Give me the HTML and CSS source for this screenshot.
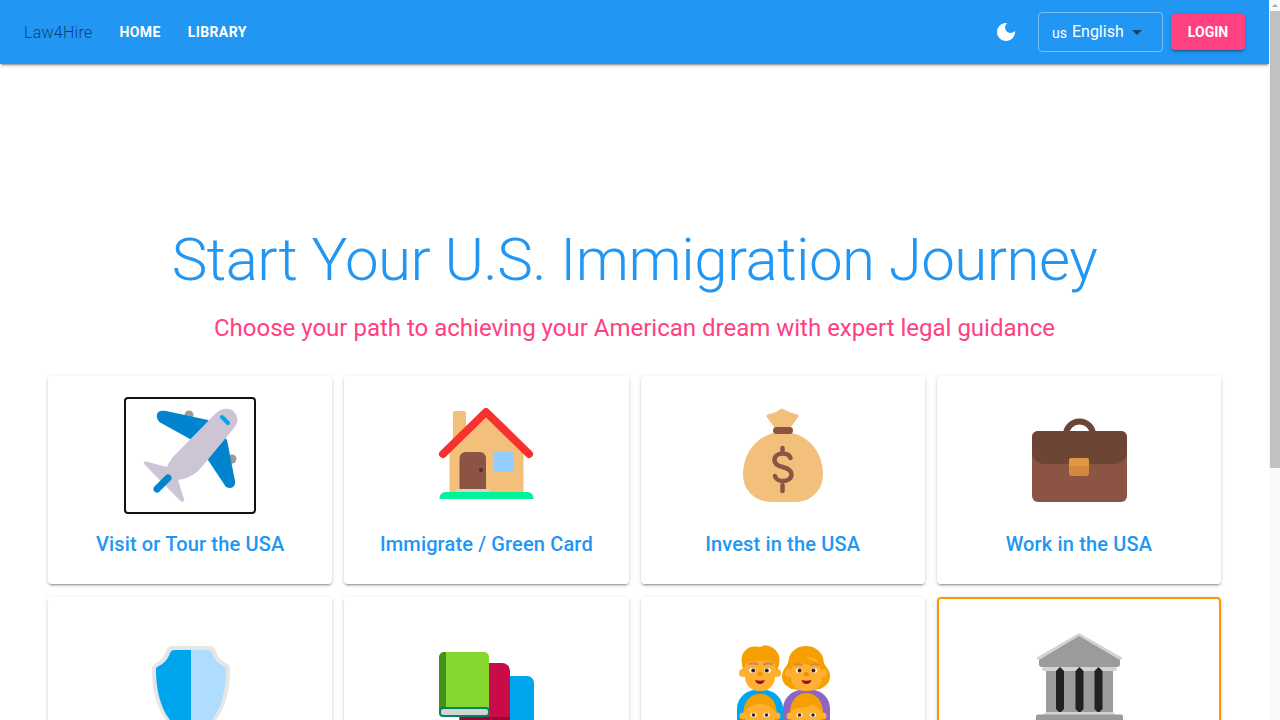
FILE: index.html
```html
<!DOCTYPE html>
<html lang="en">
<head>
    <meta charset="UTF-8">
    <title>Law4Hire</title>
    <link rel="stylesheet" href="styles.css">
</head>
<body>
    <div class="page">
        <header class="app-bar">
            <div class="brand">Law4Hire</div>
            <nav class="nav">
                <a class="nav-link" href="#">Home</a>
                <a class="nav-link" href="#">Library</a>
            </nav>
            <div class="spacer"></div>
            <button class="theme-btn" aria-label="Toggle theme">
                <svg viewBox="0 0 24 24" width="24" height="24"><path fill="#fff" d="M12 3c-4.97 0-9 4.03-9 9s4.03 9 9 9 9-4.030 9-9c0-.46-.04-.92-.1-1.360-.98 1.370-2.580 2.260-4.400 2.260-2.980 0-5.400-2.420-5.400-5.400 0-1.810.89-3.420 2.260-4.400-.44-.06-.9-.1-1.360-.1z"/></svg>
            </button>
            <div class="lang-select">
                <span class="lang-code">us</span>
                <span class="lang-name">English</span>
                <span class="lang-caret"></span>
            </div>
            <button class="login-btn">Login</button>
        </header>

        <main class="main">
            <h1 class="title">Start Your U.S. Immigration Journey</h1>
            <p class="subtitle">Choose your path to achieving your American dream with expert legal guidance</p>

            <section class="path-grid">
                <a class="path-card" href="#">
                    <span class="icon-wrap focused">
                        <svg class="path-icon" viewBox="0 0 96 96">
                            <circle cx="47" cy="7" r="4.500" fill="#9b9b9b"/>
                            <circle cx="90" cy="51" r="4.500" fill="#9b9b9b"/>
                            <path fill="#0084ce" d="M17 3.500c2-1 4-1 7-.5l42 9 19 20 8 41c.6 4-1.500 7-5 7-3 0-5-1.500-6-4L66 52 48 31 19 15c-4-2-6-9-2-11.500z"/>
                            <path fill="#cdc4d6" d="M74 5c6-5 15-6 19 0 4 5 3 10-1 15L68 49c-4 5-8 10-13 15-5 4-12 7-19 8l6 19c.5 2-1 3.500-3 2.500L3 57c-2-2-1-4 1-3.500L25 59c1-4 4-7 6-10z"/>
                            <path stroke="#0084ce" stroke-width="7" stroke-linecap="round" d="M26 70 15 81"/>
                            <path stroke="#00a6ed" stroke-width="4" stroke-linecap="round" d="M80 9l6 6"/>
                        </svg>
                    </span>
                    <span class="path-label">Visit or Tour the USA</span>
                </a>

                <a class="path-card" href="#">
                    <svg class="path-icon" viewBox="0 0 96 96">
                        <rect x="15" y="3" width="13" height="36" rx="2" fill="#f3c07b"/>
                        <path fill="#f3c07b" d="M11.500 44 48 8l37.500 36v41h-74z"/>
                        <path fill="#8c5543" d="M21.500 50a6 6 0 0 1 6-6H42a6 6 0 0 1 6 6v32H21.500z"/>
                        <circle cx="43" cy="62" r="2" fill="#4a3030"/>
                        <rect x="55.500" y="44" width="20" height="20" rx="2" fill="#92ceff"/>
                        <rect x="18" y="81" width="33.500" height="5" fill="#d3d3d3"/>
                        <path fill="#00f397" d="M1.500 91v-1a6 6 0 0 1 6-6h82a6 6 0 0 1 6 6v1z"/>
                        <path fill="none" stroke="#f8312f" stroke-width="8" stroke-linecap="round" stroke-linejoin="round" d="M5 46 48 4l43 42"/>
                    </svg>
                    <span class="path-label">Immigrate / Green Card</span>
                </a>

                <a class="path-card" href="#">
                    <svg class="path-icon" viewBox="0 0 96 96">
                        <path fill="#f3c07b" d="M48 24c24 0 40 20 40 42 0 18-14 28-28 28H36C22 94 8 84 8 66c0-22 16-42 40-42z"/>
                        <polygon fill="#f3c07b" stroke="#f3c07b" stroke-width="3" stroke-linejoin="round" points="33,8 40,6 47,2 55,6 62,8 54,19 41,19"/>
                        <rect x="38" y="19" width="20" height="7" rx="3.500" fill="#8c5543"/>
                        <path fill="none" stroke="#8c5543" stroke-width="4.500" stroke-linecap="round" d="M55.500 50c-1-3-4-4.500-7.500-4.500-5 0-8.500 2.500-8.500 6.500 0 4 3 5.800 8 7 6 1.400 9 3.500 9 7.500s-4 6.500-8.500 6.500c-4 0-7-1.500-8-5M47.500 40v5M47.500 77v6"/>
                    </svg>
                    <span class="path-label">Invest in the USA</span>
                </a>

                <a class="path-card" href="#">
                    <svg class="path-icon" viewBox="0 0 96 96">
                        <path fill="none" stroke="#6d4534" stroke-width="6" d="M35 27a13.500 13.500 0 0 1 27 0"/>
                        <rect x="1" y="23" width="95" height="71" rx="6" fill="#8c5543"/>
                        <path fill="#6d4534" d="M7 23h83a6 6 0 0 1 6 6v15c0 7-6 12-12 12H13C7 56 1 51 1 44V29a6 6 0 0 1 6-6z"/>
                        <rect x="38" y="50" width="20" height="18" rx="3" fill="#d3883e"/>
                        <path fill="#e19747" d="M41 50h14a3 3 0 0 1 3 3v5H38v-5a3 3 0 0 1 3-3z"/>
                    </svg>
                    <span class="path-label">Work in the USA</span>
                </a>

                <a class="path-card" href="#">
                    <svg class="path-icon" viewBox="0 0 96 96">
                        <path fill="#e6e6e6" d="M30 17h38c3 0 5 2 6 5 2 7 7 11 12 13 1 1 2 3 2 5 0 20-4 38-14 51-5 6-15 12-25 15-10-3-20-9-25-15C14 78 10 60 10 40c0-2 1-4 2-5 5-2 10-6 12-13 1-3 3-5 6-5z"/>
                        <path fill="#00a6ed" d="M49 21H33c-3 0-4 1-5 3-2 7-8 12-13 14-1 1-1 1-1 3 0 19 4 37 14 50 5 6 13 10 21 12z"/>
                        <path fill="#aeddff" d="M49 21h16c3 0 4 1 5 3 2 7 8 12 13 14 1 1 1 1 1 3 0 19-4 37-14 50-5 6-13 10-21 12z"/>
                    </svg>
                </a>

                <a class="path-card" href="#">
                    <svg class="path-icon" viewBox="0 0 96 96">
                        <path fill="#00a6ed" d="M68 47h21a7 7 0 0 1 7 7v42H68z"/>
                        <path fill="#ca0b4a" d="M21.500 34H64a8 8 0 0 1 8 8v54H21.500z"/>
                        <rect x="21.500" y="88" width="50.500" height="8" fill="#990838"/>
                        <path fill="#86d72f" d="M8 23h38a5 5 0 0 1 5 5v51H8z"/>
                        <path fill="#44911b" d="M6 23h2v58H1V28a5 5 0 0 1 5-5z"/>
                        <rect x="2" y="79" width="49" height="8" rx="3" fill="#d3d3d3" stroke="#008463" stroke-width="2"/>
                    </svg>
                </a>

                <a class="path-card" href="#">
                    <svg class="path-icon" viewBox="0 0 96 96">
                        <path fill="#00a6ed" d="M2 96V80c0-11 9-19 19-19h8c10 0 19 8 19 19v16z"/>
                        <path fill="#8d65c5" d="M48 96V80c0-11 9-19 19-19h10c10 0 18 8 18 19v16z"/>

                        <circle cx="8" cy="44" r="4" fill="#ffb02e"/>
                        <circle cx="42" cy="44" r="4" fill="#ffb02e"/>
                        <rect x="10" y="24" width="30" height="38" rx="14" fill="#ffb02e"/>
                        <path fill="#f59f00" d="M9 43C5 33 6 24 11 21c4-5 11-3 14-3 5-3 13-1 17 5 4 5 3 14-1 20l-1-5c0-4-3-6-7-6H17c-4 0-7 2-7 6z"/>
                        <path stroke="#d9875a" stroke-width="2.500" stroke-linecap="round" d="M14 35c2-1 5-1 8 0M29 35c3-1 6-1 8 0"/>
                        <ellipse cx="17.500" cy="41.500" rx="3.200" ry="2.400" fill="#fff"/>
                        <ellipse cx="32.500" cy="41.500" rx="3.200" ry="2.400" fill="#fff"/>
                        <circle cx="18.200" cy="41.500" r="2" fill="#372128"/>
                        <circle cx="31.800" cy="41.500" r="2" fill="#372128"/>
                        <path fill="#ed9200" d="M23.500 43h3l1.500 4h-6z"/>
                        <path fill="#990838" d="M20 51c3 1 7 1 10 0-1 3-3 4-5 4s-4-1-5-4z"/>

                        <path fill="#f59f00" d="M71 17c8 0 13 4 16 9 2 4 1 7 3 10 3 4 5 7 5 11 0 7-5 11-10 13l-14 2-14-2c-5-2-10-6-10-13 0-4 2-7 5-11 2-3 1-6 3-10 3-5 8-9 16-9z"/>
                        <circle cx="54" cy="44" r="4" fill="#ffb02e"/>
                        <circle cx="88" cy="44" r="4" fill="#ffb02e"/>
                        <rect x="56" y="28" width="31" height="34" rx="14" fill="#ffb02e"/>
                        <path fill="#f59f00" d="M55 42c0-9 5-14 12-16 6 4 13 7 21 8l-1 8-3-5-20-3-6 3z"/>
                        <path stroke="#d9875a" stroke-width="2" stroke-linecap="round" d="M60 36c2-1 5-1 7 0M76 36c2-1 5-1 7 0"/>
                        <ellipse cx="64" cy="41.500" rx="3.200" ry="2.300" fill="#fff"/>
                        <ellipse cx="79" cy="41.500" rx="3.200" ry="2.300" fill="#fff"/>
                        <circle cx="64.600" cy="41.500" r="2" fill="#372128"/>
                        <circle cx="78.400" cy="41.500" r="2" fill="#372128"/>
                        <path fill="#ed9200" d="M70 43h3l1.500 4h-6z"/>
                        <path fill="#990838" d="M66.500 51c3 1 7 1 10 0-1 3-3 4-5 4s-4-1-5-4z"/>

                        <circle cx="8" cy="87" r="3.500" fill="#ffb02e"/>
                        <circle cx="42" cy="87" r="3.500" fill="#ffb02e"/>
                        <circle cx="25" cy="84" r="16.500" fill="#ffb02e"/>
                        <path fill="#f59f00" d="M8.500 84c0-12 7-19 16.500-19s16.500 7 16.500 19l-5-5c-3-3-7-4-11.500-4s-8.500 1-11.500 4z"/>
                        <ellipse cx="18.500" cy="86" rx="3" ry="2.200" fill="#fff"/>
                        <ellipse cx="31.500" cy="86" rx="3" ry="2.200" fill="#fff"/>
                        <circle cx="18.500" cy="86" r="1.800" fill="#372128"/>
                        <circle cx="31.500" cy="86" r="1.800" fill="#372128"/>

                        <circle cx="55" cy="87" r="3.500" fill="#ffb02e"/>
                        <circle cx="88" cy="87" r="3.500" fill="#ffb02e"/>
                        <circle cx="71.500" cy="84" r="16.500" fill="#ffb02e"/>
                        <path fill="#f59f00" d="M55 84c0-12 7-20 16.500-20S88 72 88 84l-4-4-6-5-6 3c-5 1-9 1-13 2z"/>
                        <ellipse cx="64.500" cy="86" rx="3" ry="2.200" fill="#fff"/>
                        <ellipse cx="78" cy="86" rx="3" ry="2.200" fill="#fff"/>
                        <circle cx="64.500" cy="86" r="1.800" fill="#372128"/>
                        <circle cx="78" cy="86" r="1.800" fill="#372128"/>
                    </svg>
                </a>

                <a class="path-card active" href="#">
                    <svg class="path-icon" viewBox="0 0 96 96">
                        <path fill="#9b9b9b" d="M48 6 8 30v5a3 3 0 0 0 3 3h75a3 3 0 0 0 3-3v-5z"/>
                        <path fill="#d3d3d3" d="M48 4 5 29l3 2 40-24 41 24 3-2z"/>
                        <rect x="15" y="41" width="67" height="43" fill="#9b9b9b"/>
                        <rect x="11" y="38" width="75" height="4" rx="2" fill="#d3d3d3"/>
                        <path fill="#212121" d="M29 38l4 4v38l-4 4-4-4V42zM48.500 38l4 4v38l-4 4-4-4V42zM67.500 38l4 4v38l-4 4-4-4V42z"/>
                        <path fill="#d3d3d3" d="M15 83h67l3 3H12z"/>
                        <rect x="5" y="85.500" width="87" height="10" rx="2" fill="#9b9b9b"/>
                    </svg>
                </a>
            </section>
        </main>
    </div>

    <div class="scrollbar">
        <div class="scroll-btn"></div>
        <div class="scroll-thumb"></div>
    </div>
</body>
</html>
```

FILE: styles.css
```css
* { box-sizing: border-box; }

body {
    display: flex;
    height: 100vh;
    margin: 0;
    overflow: hidden;
    background: #fff;
    font-family: Roboto, "Liberation Sans", sans-serif;
    color: rgba(0,0,0,0.87);
}

a { text-decoration: none; }
button { font-family: inherit; border: none; background: none; padding: 0; cursor: pointer; }

.page { flex: 1; min-width: 0; height: 100%; overflow: hidden; }

.scrollbar { flex: none; width: 11px; background: #fafafa; }

.scroll-btn { position: relative; height: 11px; }

.scroll-btn::after {
    content: "";
    position: absolute;
    top: 4px;
    left: 3px;
    border-left: 3px solid transparent;
    border-right: 3px solid transparent;
    border-bottom: 3px solid #a8a8a8;
}

.scroll-thumb { height: 457px; margin-left: 1px; background: #c1c1c1; }

.app-bar {
    display: flex;
    align-items: center;
    height: 64px;
    padding: 0 24px;
    background: #2196f3;
    box-shadow: 0 3px 1px -2px rgba(0,0,0,0.2), 0 2px 2px 0 rgba(0,0,0,0.14), 0 1px 5px 0 rgba(0,0,0,0.12);
}

.brand {
    font-size: 16px;
    font-weight: 300;
    letter-spacing: 0.25px;
    color: rgba(0,0,0,0.6);
    margin-right: 27px;
}

.nav { display: flex; gap: 27px; }

.nav-link {
    color: #fff;
    font-size: 14px;
    font-weight: 700;
    letter-spacing: 0.4px;
    text-transform: uppercase;
}

.spacer { flex: 1; }

.theme-btn {
    display: flex;
    width: 24px;
    height: 24px;
    margin-right: 20px;
}

.lang-select {
    display: flex;
    align-items: center;
    width: 125px;
    height: 40px;
    padding-left: 13px;
    border: 1px solid rgba(255,255,255,0.4);
    border-radius: 4px;
    color: #fff;
}

.lang-code { font-size: 14px; margin-right: 5px; padding-top: 1px; }
.lang-name { font-size: 16px; margin-top: -2px; }

.lang-caret {
    width: 0;
    height: 0;
    margin-left: 8px;
    border-left: 5px solid transparent;
    border-right: 5px solid transparent;
    border-top: 5px solid rgba(0,0,0,0.54);
}

.login-btn {
    height: 36px;
    width: 74px;
    margin-left: 8px;
    border-radius: 4px;
    background: #ff4081;
    color: #fff;
    font-size: 14px;
    font-weight: 700;
    text-transform: uppercase;
    box-shadow: 0 3px 1px -2px rgba(0,0,0,0.2), 0 2px 2px 0 rgba(0,0,0,0.14), 0 1px 5px 0 rgba(0,0,0,0.12);
}

.main { padding: 160px 48px 32px; }

.title {
    margin: 0;
    font-size: 60px;
    line-height: 72px;
    font-weight: 300;
    letter-spacing: -0.5px;
    text-align: center;
    color: #2196f3;
}

.subtitle {
    margin: 16px 0 32px;
    font-size: 24px;
    line-height: 32px;
    text-align: center;
    color: #ff4081;
}

.path-grid {
    display: grid;
    grid-template-columns: repeat(4, 1fr);
    gap: 13px 12px;
}

.path-card {
    display: flex;
    flex-direction: column;
    align-items: center;
    height: 208px;
    padding: 32px 16px 26px;
    border-radius: 4px;
    background: #fff;
    box-shadow: 0 3px 1px -2px rgba(0,0,0,0.2), 0 2px 2px 0 rgba(0,0,0,0.14), 0 1px 5px 0 rgba(0,0,0,0.12);
}

.path-card.active { outline: 2px solid #ff9800; outline-offset: -2px; }

.path-icon { display: block; width: 96px; height: 96px; flex: none; }

.icon-wrap { position: relative; display: block; width: 96px; height: 96px; }

.icon-wrap.focused::after {
    content: "";
    position: absolute;
    inset: -11px -18px -10px;
    border: 2px solid #111;
    border-radius: 4px;
}

.path-label {
    margin-top: 26px;
    font-size: 20px;
    line-height: 28px;
    font-weight: 500;
    letter-spacing: 0.15px;
    color: #2196f3;
}
```
